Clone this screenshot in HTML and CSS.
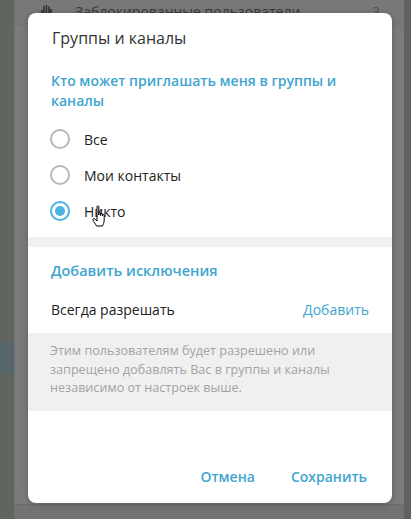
FILE: index.html
```html
<html>
    <head>
    <title>Группы и каналы</title>
    <link rel="stylesheet" href="styles.css">
    </head>
    <body>

    <div class="backdrop">
        <div class="side-left">
            <div class="side-band"></div>
        </div>
        <div class="panel">
            <div class="panel-row">
                <svg class="row-icon" width="14" height="14" viewBox="0 0 14 14">
                    <path d="M3 13 L3 6 M5 12 L5 2 M7.5 12 L7.5 1 M10 12 L10 2.5 M12 12 L12 5 M2.5 13 L12.5 13" stroke="#333" stroke-width="1.6" fill="none"/>
                </svg>
                <span class="row-text">Заблокированные пользователи</span>
                <span class="row-count">3</span>
            </div>
            <div class="panel-fill"></div>
            <div class="panel-bottom"></div>
        </div>
        <div class="side-right"></div>
    </div>

    <div class="modal">
        <h1 class="modal-title">Группы и каналы</h1>

        <div class="section">
            <h2 class="section-head">Кто может приглашать меня в группы и каналы</h2>
            <div class="radio-list">
                <div class="radio-row">
                    <span class="radio"></span>
                    <span class="radio-label">Все</span>
                </div>
                <div class="radio-row">
                    <span class="radio"></span>
                    <span class="radio-label">Мои контакты</span>
                </div>
                <div class="radio-row">
                    <span class="radio checked"></span>
                    <span class="radio-label">Никто</span>
                </div>
            </div>
        </div>

        <div class="divider"></div>

        <div class="section">
            <h2 class="section-head exceptions">Добавить исключения</h2>
            <div class="exception-row">
                <span>Всегда разрешать</span>
                <a class="link">Добавить</a>
            </div>
        </div>

        <div class="note">
            Этим пользователям будет разрешено или запрещено добавлять Вас в группы и каналы независимо от настроек выше.
        </div>

        <div class="modal-footer">
            <a class="link button">Отмена</a>
            <a class="link button">Сохранить</a>
        </div>
    </div>

    <!-- mouse pointer over the last option -->
    <svg class="cursor" width="18" height="24" viewBox="0 0 18 24">
        <path d="M5 1.5 C5 0.8 6.8 0.8 6.8 1.5 L6.8 10 L6.8 8 C6.8 7.2 8.6 7.2 8.6 8 L8.6 10.5 L8.6 9 C8.6 8.2 10.4 8.2 10.4 9 L10.4 11 L10.4 10 C10.4 9.2 12.2 9.2 12.2 10 L12.2 15 C12.2 18 11 19.5 10.5 21 L4.5 21 C3.5 19 1.5 16.5 1 15 C0.6 13.8 1.8 13 2.6 13.8 L5 16 Z" fill="#fff" stroke="#000" stroke-width="1"/>
    </svg>

    </body>
</html>
```

FILE: styles.css
```css
body {
  font-family: 'Open Sans', sans-serif;
  margin: 0;
  padding: 0;
  width: 411px;
  height: 519px;
  overflow: hidden;
  background-color: #777777;
}

/* dimmed window behind the dialog */
.backdrop {
  display: flex;
  height: 519px;
}

.side-left {
  width: 14px;
  background-color: #60655f;
  display: flex;
  flex-direction: column;
  justify-content: flex-end;
  padding-bottom: 145px;
  box-sizing: border-box;
}

.side-band {
  height: 32px;
  background-color: #56666a;
}

.side-right {
  width: 7px;
  background-color: #5e6360;
}

.panel {
  flex: 1;
  display: flex;
  flex-direction: column;
  background-color: #7b7b7b;
  border-left: 1px solid #727272;
}

.panel-row {
  display: flex;
  align-items: center;
  height: 28px;
  padding: 0 24px;
  background-color: #787878;
  border-bottom: 1px solid #747474;
  color: #3a3a3a;
  font-size: 14px;
  margin-top: -3px;
}

.row-icon {
  margin-right: 22px;
}

.row-text {
  flex: 1;
}

.row-count {
  color: #555555;
}

.panel-fill {
  flex: 1;
}

.panel-bottom {
  height: 14px;
  background-color: #737373;
  border-top: 1px solid #6c6c6c;
}

/* dialog */
.modal {
  position: absolute;
  left: 28px;
  top: 13px;
  width: 364px;
  height: 490px;
  background-color: #ffffff;
  border-radius: 8px;
  box-shadow: 0 1px 6px rgba(0, 0, 0, 0.25);
  display: flex;
  flex-direction: column;
  overflow: hidden;
}

.modal-title {
  margin: 0;
  padding: 14px 24px 0;
  font-size: 16px;
  font-weight: 400;
  line-height: 22px;
  color: #333333;
}

.section {
  padding: 0 23px 0 23px;
}

.section-head {
  margin: 22px 0 0;
  font-size: 14px;
  font-weight: 600;
  line-height: 19.5px;
  color: #40a5cf;
  padding-right: 10px;
}

.radio-list {
  display: flex;
  flex-direction: column;
  padding: 11px 0 8px;
}

.radio-row {
  display: flex;
  align-items: center;
  height: 36px;
}

.radio {
  width: 20px;
  height: 20px;
  box-sizing: border-box;
  border: 2px solid #b8b8b8;
  border-radius: 50%;
  margin-left: -1px;
  margin-right: 14px;
  display: flex;
  align-items: center;
  justify-content: center;
}

.radio.checked {
  border-color: #4bb3e3;
}

.radio.checked::after {
  content: "";
  width: 10px;
  height: 10px;
  border-radius: 50%;
  background-color: #4bb3e3;
}

.radio-label {
  font-size: 14px;
  color: #222222;
}

.divider {
  height: 10px;
  background-color: #f1f1f1;
}

.section-head.exceptions {
  margin-top: 14px;
  line-height: 20px;
  font-size: 14.5px;
}

.exception-row {
  display: flex;
  justify-content: space-between;
  padding: 19px 0 13px;
  line-height: 20px;
  font-size: 14px;
  color: #222222;
}

.link {
  color: #40a5cf;
  text-decoration: none;
  cursor: pointer;
}

.note {
  background-color: #f0f0f0;
  padding: 9px 30px 13px 22px;
  font-size: 12.6px;
  line-height: 18.5px;
  color: #a3a3a3;
}

.modal-footer {
  margin-top: auto;
  display: flex;
  justify-content: flex-end;
  gap: 36px;
  padding: 0 25px 16px;
}

.button {
  font-size: 14px;
  font-weight: 600;
  line-height: 20px;
}

.cursor {
  position: absolute;
  left: 92px;
  top: 205px;
}
```
